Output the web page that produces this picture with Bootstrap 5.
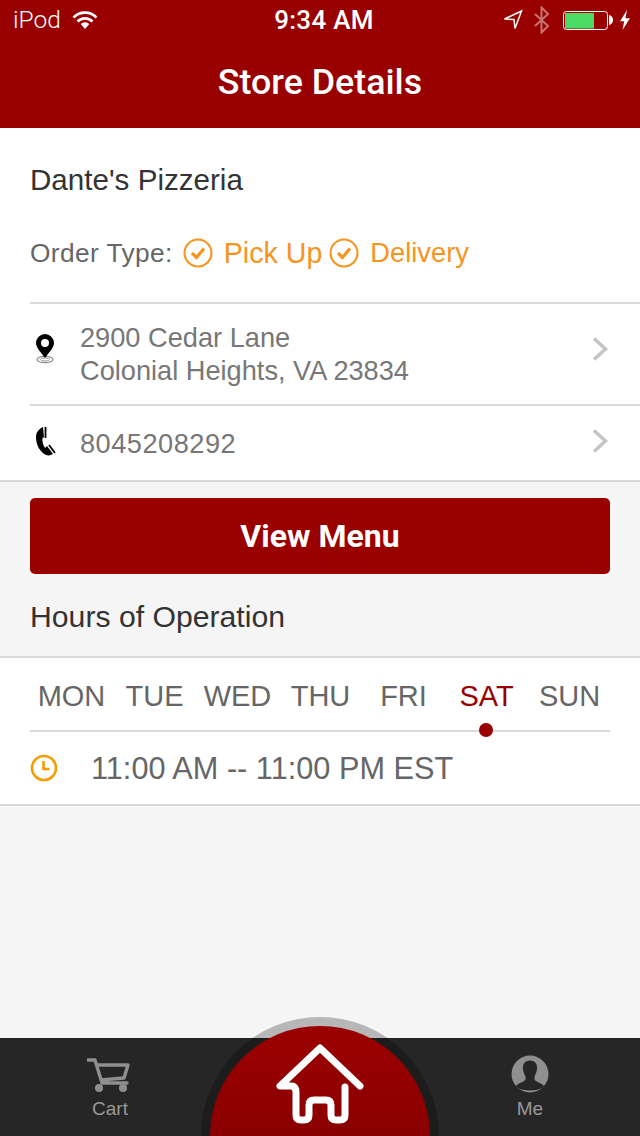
<!DOCTYPE html>
<html lang="en">
<head>
<meta charset="utf-8">
<title>Store Details</title>
<link href="https://cdn.jsdelivr.net/npm/bootstrap@5.3.0/dist/css/bootstrap.min.css" rel="stylesheet">
<style>
html,body{margin:0;background:#f5f5f5}
body{font-family:"Liberation Sans",Arial,sans-serif;color:#333}
.app{width:640px;height:1136px;overflow:hidden;position:relative;background:#f5f5f5}
.top-head{background:#990000;color:#fff;height:128px;font-family:Roboto,"Liberation Sans",sans-serif}
.status-row{height:40px;padding:0 10px 0 13px;font-size:24.5px}
.status-row .clock-time{font-weight:500;font-size:26px;letter-spacing:.3px;margin-left:5px}
.status-side{width:200px}
.wifi-ic{margin-left:11px}
.arrow-ic{margin-right:10px}
.bt-ic{margin-right:12px}
.nub-ic{margin-left:1px}
.bolt-ic{margin-left:7px}
.title-row{height:88px;padding-bottom:3px;font-size:35.8px;font-weight:500}
.white-block{background:#fff;border-bottom:2px solid #d9d9d9}
.store-name{font-size:29.6px;height:103px;padding:35px 0 0 30px;line-height:33px;color:#333}
.type-row{padding-left:30px;height:71px;font-size:26.3px;color:#666;letter-spacing:.4px;padding-bottom:27px}
.type-label{margin-right:10px;padding-top:2px}
.type-check{margin-right:11px}
.type-on{color:#f7941e;letter-spacing:0}
.type-pick{font-size:28.6px;margin-right:7px}
.type-deliv{font-size:27.3px}
.info-row{margin-left:30px;border-top:2px solid #d9d9d9;padding-right:30px;color:#777;font-size:27.2px;line-height:33px}
.addr-row{height:102px}
.tel-row{height:76px}
.tel-num{letter-spacing:.5px}
.info-icon{width:50px}
.addr-side{margin-bottom:10px}
.tel-side{margin-bottom:4px}
.tel-icon{margin-bottom:6px}
.menu-btn{background:#990000;border:0;height:76px;color:#fff;font-size:32px;font-weight:700;border-radius:5px;font-family:Roboto,"Liberation Sans",sans-serif;width:580px;margin:16px 30px 0}
.menu-btn:hover{background:#990000;color:#fff}
.hours-title{font-size:30.2px;height:82px;line-height:33px;padding:26px 0 0 30px;color:#333}
.hours-block{background:#fff;border-top:2px solid #d9d9d9;border-bottom:2px solid #d9d9d9;height:150px}
.day-strip{margin:0 30px;height:74px;border-bottom:2px solid #d9d9d9;position:relative;font-size:29px;color:#666;padding-top:6px}
.day-item{width:83px;text-align:center;flex:none}
.day-on{color:#990000}
.day-dot{position:absolute;width:14px;height:14px;border-radius:50%;background:#990000;left:448.5px;top:65px}
.hour-row{padding:2px 0 0 30px;height:72px;font-size:30.7px;color:#666}
.hour-row svg{margin-right:33px;margin-top:-2px}
.spacer-fill{flex:1 1 auto}
.tab-strip{background:#262626;height:98px;color:#999;font-size:19px}
.tab-item{width:220px;line-height:22px}
.dome{position:absolute;left:201px;top:1017px;width:238px;height:238px;border-radius:50%;background:rgba(0,0,0,.25)}
.dome-in{position:absolute;left:210px;top:1026px;width:220px;height:220px;border-radius:50%;background:linear-gradient(#9c0000,#8a0000 50%)}
.home-ic{position:absolute;left:276px;top:1044px}
</style>
</head>
<body>
<div class="app d-flex flex-column">
  <header class="top-head flex-shrink-0">
    <div class="status-row d-flex align-items-center justify-content-between">
      <div class="status-side d-flex align-items-center">
        <span class="fw-light">iPod</span>
        <svg class="wifi-ic" width="26" height="18" viewBox="0 0 26 18"><g fill="none" stroke="#fff" stroke-width="2.6"><path d="M1.5 6.5a16 16 0 0 1 23 0"/><path d="M5.5 10.5a10.500 10.500 0 0 1 15 0"/></g><path d="M8.700 13a6 6 0 0 1 8.600 0L13 18z" fill="#fff"/></svg>
      </div>
      <span class="clock-time">9:34 AM</span>
      <div class="status-side d-flex align-items-center justify-content-end">
        <svg class="arrow-ic" width="20" height="22" viewBox="0 0 20 22"><path d="M1.500 10 18.500 2 12 19.500 11 10.500z" fill="none" stroke="#fff" stroke-width="1.500"/></svg>
        <svg class="bt-ic" width="18" height="28" viewBox="0 0 18 28"><path d="M2 8l13 12-6.500 6.500v-25L15 8 2 20" fill="none" stroke="#fff" stroke-opacity=".45" stroke-width="2"/></svg>
        <svg width="45" height="22" viewBox="0 0 45 22"><rect x=".5" y="2.500" width="44" height="18" rx="3" fill="none" stroke="#fff"/><rect x="2" y="4" width="29" height="15.500" fill="#4cd964"/></svg>
        <svg class="nub-ic" width="4" height="10" viewBox="0 0 4 10"><path d="M0 0q4 1 4 5t-4 5z" fill="#fff"/></svg>
        <svg class="bolt-ic" width="10" height="20" viewBox="0 0 12 24"><path d="M8.500 0 0 13.500h5L3 24l9-14H6.500z" fill="#fff"/></svg>
      </div>
    </div>
    <div class="title-row d-flex align-items-center justify-content-center">Store Details</div>
  </header>

  <section class="white-block flex-shrink-0">
    <div class="store-name">Dante's Pizzeria</div>
    <div class="type-row d-flex align-items-center">
      <span class="type-label">Order Type:</span>
      <svg class="type-check" width="30" height="30" viewBox="0 0 30 30"><circle cx="15" cy="15" r="13.500" fill="none" stroke="#f7941e" stroke-width="2"/><path d="M9 15l4.500 4.500 7.500-9" fill="none" stroke="#f7941e" stroke-width="3.200"/></svg>
      <span class="type-on type-pick">Pick Up</span>
      <svg class="type-check" width="30" height="30" viewBox="0 0 30 30"><circle cx="15" cy="15" r="13.500" fill="none" stroke="#f7941e" stroke-width="2"/><path d="M9 15l4.500 4.500 7.500-9" fill="none" stroke="#f7941e" stroke-width="3.200"/></svg>
      <span class="type-on type-deliv">Delivery</span>
    </div>
    <div class="info-row addr-row d-flex align-items-center">
      <div class="info-icon addr-side d-flex flex-shrink-0">
        <svg width="30" height="30" viewBox="0 0 30 30"><ellipse cx="15" cy="25.500" rx="8" ry="3.200" fill="none" stroke="#888" stroke-width="1.200"/><ellipse cx="15" cy="25.500" rx="4.500" ry="1.500" fill="none" stroke="#999" stroke-width="1"/><path fill-rule="evenodd" d="M15 0a9 9 0 0 0-9 9c0 5 6 10.500 9 15 3-4.500 9-10 9-15a9 9 0 0 0-9-9zm0 5a4 4 0 1 1 0 8 4 4 0 0 1 0-8z" fill="#000"/></svg>
      </div>
      <div class="flex-grow-1">2900 Cedar Lane<br>Colonial Heights, VA 23834</div>
      <svg class="addr-side" width="18" height="26" viewBox="0 0 18 26"><path d="M2 2.500l11.500 10.500L2 23.500" fill="none" stroke="#c4c4c4" stroke-width="3.500"/></svg>
    </div>
    <div class="info-row tel-row d-flex align-items-center">
      <div class="info-icon tel-icon d-flex flex-shrink-0">
        <svg width="30" height="32" viewBox="0 0 30 32"><path d="M13 3C9 5 6 8 6 13c0 8 4 15 10 18 3 1 5 0 7-1l-6-8-2 2c-2-3-3-7-2.500-10L14 13z" fill="#000"/><path d="M15.500 3v11M19 21l6 8" fill="none" stroke="#000" stroke-width="1.800"/></svg>
      </div>
      <div class="flex-grow-1 tel-num">8045208292</div>
      <svg class="tel-side" width="18" height="26" viewBox="0 0 18 26"><path d="M2 2.500l11.500 10.500L2 23.500" fill="none" stroke="#c4c4c4" stroke-width="3.500"/></svg>
    </div>
  </section>

  <button type="button" class="btn menu-btn flex-shrink-0">View Menu</button>
  <div class="hours-title flex-shrink-0">Hours of Operation</div>

  <section class="hours-block flex-shrink-0">
    <div class="day-strip d-flex align-items-center">
      <span class="day-item">MON</span><span class="day-item">TUE</span><span class="day-item">WED</span><span class="day-item">THU</span><span class="day-item">FRI</span><span class="day-item day-on">SAT</span><span class="day-item">SUN</span>
      <span class="day-dot"></span>
    </div>
    <div class="hour-row d-flex align-items-center">
      <svg width="28" height="28" viewBox="0 0 28 28"><circle cx="14" cy="14" r="12" fill="none" stroke="#f59d00" stroke-width="2.600"/><path d="M13.500 7v8h6" fill="none" stroke="#f59d00" stroke-width="2.600"/></svg>
      <span>11:00 AM -- 11:00 PM EST</span>
    </div>
  </section>

  <div class="spacer-fill"></div>

  <nav class="tab-strip d-flex justify-content-between flex-shrink-0">
    <div class="tab-item d-flex flex-column align-items-center pt-3">
      <svg width="46" height="40" viewBox="0 0 46 40"><path d="M1 6h7l7 23h25M10 11h31l-4 13-23 2" fill="none" stroke="#8f8f8f" stroke-width="3.400" stroke-linejoin="round" stroke-linecap="round"/><circle cx="12" cy="34" r="4" fill="#8f8f8f"/><circle cx="36" cy="34" r="4" fill="#8f8f8f"/></svg>
      <span class="mt-1">Cart</span>
    </div>
    <div class="tab-item d-flex flex-column align-items-center pt-3">
      <svg width="40" height="40" viewBox="0 0 40 40"><circle cx="20" cy="20" r="18.500" fill="#8f8f8f"/><path d="M20 6.500c-5 0-7.500 3.500-7 8.500.3 3 1.500 5.500 2.500 7.500v3c-1 2-5 3-8 5-1 .8-1.500 1.500-1 2.500 3 2.500 8 3.500 13.500 3.500s10.500-1 13.500-3.500c.5-1 0-1.700-1-2.500-3-2-7-3-8-5v-3c1-2 2.200-4.500 2.500-7.500.5-5-2-8.500-7-8.500z" fill="#262626"/></svg>
      <span class="mt-1">Me</span>
    </div>
  </nav>

  <div class="dome"></div>
  <div class="dome-in"></div>
  <svg class="home-ic" width="88" height="82" viewBox="0 0 88 82"><path d="M84 42 44 4 4 42H15Q20 42 20 48V71Q20 76 25 76H28Q33 76 33 71V61Q33 56 38 56H50Q55 56 55 61V71Q55 76 60 76H64Q69 76 69 71V43" fill="none" stroke="#fff" stroke-width="7" stroke-linecap="round" stroke-linejoin="round"/></svg>
</div>
<script src="https://cdn.jsdelivr.net/npm/bootstrap@5.3.0/dist/js/bootstrap.bundle.min.js"></script>
</body>
</html>
